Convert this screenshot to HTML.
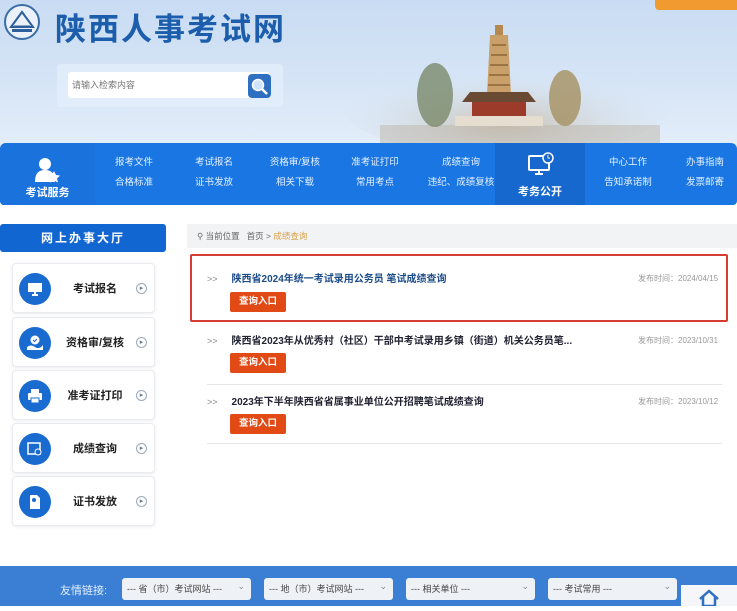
<!DOCTYPE html>
<html><head><meta charset="utf-8"><style>
*{margin:0;padding:0;box-sizing:border-box}
body{width:737px;height:606px;overflow:hidden;background:#fff;font-family:"Liberation Sans","Noto Sans CJK SC",sans-serif;position:relative}
.abs{position:absolute}
.hdr{left:0;top:0;width:737px;height:150px;background:linear-gradient(180deg,#c9dcf3 0%,#d6e5f6 55%,#e4eefa 100%)}
.title{left:55px;top:4px;font-size:31px;font-weight:bold;color:#1c5eab;letter-spacing:2px;font-family:"Noto Sans CJK SC",sans-serif}
.nav{left:0;top:143px;width:737px;height:62px;background:#1976e3;border-radius:6px 6px 4px 4px}
.nl{color:#e8f1ff;font-size:9.5px;text-align:center;line-height:20px}
.side{left:0;top:224px;width:166px;height:28px;background:#1266d2;color:#fff;font-size:12px;font-weight:bold;text-align:center;line-height:28px;border-radius:3px;letter-spacing:2px}
.card{left:12px;width:143px;height:50px;background:#fff;border:1px solid #e8ebef;border-radius:4px;box-shadow:0 1px 3px rgba(0,0,0,.08)}
.card .ic{position:absolute;left:6px;top:9px;width:32px;height:32px;border-radius:50%;background:#1a6bd0}
.card .ic svg{position:absolute;left:8px;top:8px}
.card .t{position:absolute;left:44px;width:76px;text-align:center;top:16px;font-size:11px;color:#222;font-weight:bold}
.card .ar{position:absolute;left:123px;top:19px;width:11px;height:11px;border:1px solid #9ab;border-radius:50%;font-size:7px;color:#678;text-align:center;line-height:10px}
.it{left:207px;font-size:10px;color:#223;font-weight:bold}
.it b{color:#888;font-weight:normal;margin-right:14px;font-size:9px}
.dt{font-size:8px;color:#999;left:638px}
.btn{left:230px;width:56px;height:20px;background:#e24a15;color:#fff;font-size:9.5px;text-align:center;line-height:20px;border-radius:2px;font-weight:bold}
.sel{top:578px;width:129px;height:22px;background:#eef1f5;border-radius:3px;font-size:9px;color:#444;line-height:22px;padding-left:5px}
.sel:after{content:"⌄";position:absolute;right:6px;top:-3px;color:#888}
</style></head><body>
<div class="abs hdr"></div>
<div class="abs" style="left:655px;top:0;width:82px;height:10px;background:#f19a2f;border-radius:0 0 0 4px"></div>
<svg class="abs" style="left:3px;top:3px" width="38" height="38" viewBox="0 0 38 38"><circle cx="19" cy="19" r="17" fill="#eaf1fa" stroke="#3b6ea8" stroke-width="2"/><path d="M8 24 L19 9 L30 24 Z" fill="none" stroke="#2c5f9c" stroke-width="2"/><path d="M9 26h20v3H9z" fill="#2c5f9c"/><path d="M11 23h16" stroke="#2c5f9c"/></svg>
<div class="abs title">陕西人事考试网</div>
<div class="abs" style="left:57px;top:64px;width:226px;height:43px;background:rgba(230,240,252,.7);border-radius:4px"></div>
<div class="abs" style="left:68px;top:72px;width:202px;height:26px;background:#fff;border-radius:3px;font-size:9px;color:#777;line-height:26px;padding-left:4px">请输入检索内容</div>
<div class="abs" style="left:248px;top:74px;width:23px;height:24px;background:#2f6fc2;border-radius:4px"><svg width="23" height="24"><circle cx="10" cy="11" r="5.5" fill="#cfe3fb" stroke="#fff" stroke-width="1.5"/><path d="M14 15l5 5" stroke="#fff" stroke-width="2.5"/></svg></div>
<svg class="abs" style="left:340px;top:20px" width="330" height="125" viewBox="0 0 330 125">
<defs><radialGradient id="g" cx=".5" cy=".7" r=".55"><stop offset="0" stop-color="#c9c0b0"/><stop offset="1" stop-color="#d6e5f6" stop-opacity="0"/></radialGradient></defs>
<ellipse cx="165" cy="85" rx="165" ry="50" fill="url(#g)"/>
<rect x="40" y="105" width="280" height="20" fill="#bdb6aa" opacity=".5"/>
<ellipse cx="95" cy="75" rx="18" ry="32" fill="#7a8a6a" opacity=".8"/>
<ellipse cx="225" cy="78" rx="16" ry="28" fill="#a59060" opacity=".8"/>
<rect x="155" y="5" width="8" height="10" fill="#b58850"/>
<path d="M150 15h18l3 60h-24z" fill="#c9a06a"/>
<path d="M152 25h14M151 35h16M150 45h18M149 55h20M148 65h22" stroke="#8a6535" stroke-width="1.5"/>
<path d="M130 72h58l8 10h-74z" fill="#6b4a33"/>
<rect x="132" y="82" width="54" height="14" fill="#9c3b2a"/>
<rect x="115" y="96" width="88" height="10" fill="#e4ddd0"/>
</svg>
<div class="abs nav"></div>
<div class="abs" style="left:0;top:143px;width:95px;height:62px;background:#1a72dc;border-radius:6px 0 0 4px"></div>
<div class="abs" style="left:495px;top:143px;width:90px;height:62px;background:#1668cf"></div>
<svg class="abs" style="left:33px;top:157px" width="28" height="26"><circle cx="12" cy="7" r="6" fill="#fff"/><path d="M2 25c0-9 4-12 10-12s10 3 10 12z" fill="#fff"/><path d="M21 14l2 4 4 .5-3 3 1 4-4-2-4 2 1-4-3-3 4-.5z" fill="#fff"/></svg>
<div class="abs nl" style="left:0;top:183px;width:95px;font-size:11px;font-weight:bold;color:#fff">考试服务</div>
<div class="abs nl" style="left:104px;top:153px;width:60px">报考文件<br>合格标准</div>
<div class="abs nl" style="left:184px;top:153px;width:60px">考试报名<br>证书发放</div>
<div class="abs nl" style="left:264px;top:153px;width:62px">资格审/复核<br>相关下载</div>
<div class="abs nl" style="left:344px;top:153px;width:62px">准考证打印<br>常用考点</div>
<div class="abs nl" style="left:418px;top:153px;width:86px">成绩查询<br>违纪、成绩复核</div>
<svg class="abs" style="left:527px;top:152px" width="28" height="26"><rect x="2" y="4" width="20" height="14" rx="1" fill="none" stroke="#fff" stroke-width="2"/><path d="M8 22h8M12 18v4" stroke="#fff" stroke-width="2"/><circle cx="21" cy="6" r="5" fill="#1668cf" stroke="#fff" stroke-width="1.5"/><path d="M21 3v3h2" stroke="#fff"/></svg>
<div class="abs nl" style="left:495px;top:182px;width:90px;font-size:11px;font-weight:bold;color:#fff">考务公开</div>
<div class="abs nl" style="left:598px;top:153px;width:60px">中心工作<br>告知承诺制</div>
<div class="abs nl" style="left:676px;top:153px;width:58px">办事指南<br>发票邮寄</div>

<div class="abs side">网上办事大厅</div>
<div class="abs card" style="top:263px"><div class="ic"><svg width="16" height="16"><rect x="1" y="2" width="14" height="9" fill="#fff"/><path d="M5 14h6M8 11v3" stroke="#fff" stroke-width="2"/></svg></div><div class="t">考试报名</div><div class="ar">▸</div></div>
<div class="abs card" style="top:317px"><div class="ic"><svg width="16" height="16"><circle cx="8" cy="5" r="4.5" fill="#fff"/><path d="M6 5l1.5 1.5L10 4" stroke="#1a6bd0" fill="none"/><path d="M0 12q4-3 8 0t8-2v5H0z" fill="#fff"/></svg></div><div class="t">资格审/复核</div><div class="ar">▸</div></div>
<div class="abs card" style="top:370px"><div class="ic"><svg width="16" height="16"><rect x="4" y="1" width="8" height="4" fill="#fff"/><rect x="1" y="5" width="14" height="7" rx="1" fill="#fff"/><rect x="4" y="10" width="8" height="5" fill="#fff" stroke="#1a6bd0"/></svg></div><div class="t">准考证打印</div><div class="ar">▸</div></div>
<div class="abs card" style="top:423px"><div class="ic"><svg width="16" height="16"><rect x="1" y="2" width="12" height="11" fill="none" stroke="#fff" stroke-width="1.5"/><circle cx="11" cy="11" r="3" fill="#1a6bd0" stroke="#fff"/></svg></div><div class="t">成绩查询</div><div class="ar">▸</div></div>
<div class="abs card" style="top:476px"><div class="ic"><svg width="16" height="16"><path d="M3 1h7l3 3v11H3z" fill="#fff"/><circle cx="7" cy="6" r="2" fill="#1a6bd0"/></svg></div><div class="t">证书发放</div><div class="ar">▸</div></div>

<div class="abs" style="left:187px;top:224px;width:550px;height:24px;background:#f2f3f5;font-size:8.5px;color:#666;line-height:24px;padding-left:10px">⚲ 当前位置&nbsp;&nbsp;&nbsp;首页 &gt; <span style="color:#d9a24a">成绩查询</span></div>
<div class="abs" style="left:190px;top:254px;width:538px;height:68px;border:2px solid #d63c32;border-radius:2px"></div>
<div class="abs it" style="top:270px"><b>&gt;&gt;</b><span style="color:#1b4c8a">陕西省2024年统一考试录用公务员 笔试成绩查询</span></div>
<div class="abs dt" style="top:273px">发布时间：2024/04/15</div>
<div class="abs btn" style="top:292px">查询入口</div>
<div class="abs it" style="top:332px"><b>&gt;&gt;</b>陕西省2023年从优秀村（社区）干部中考试录用乡镇（街道）机关公务员笔...</div>
<div class="abs dt" style="top:335px">发布时间：2023/10/31</div>
<div class="abs btn" style="top:353px">查询入口</div>
<div class="abs" style="left:207px;top:384px;width:515px;height:1px;background:#e6e6e6"></div>
<div class="abs it" style="top:393px"><b>&gt;&gt;</b>2023年下半年陕西省省属事业单位公开招聘笔试成绩查询</div>
<div class="abs dt" style="top:396px">发布时间：2023/10/12</div>
<div class="abs btn" style="top:414px">查询入口</div>
<div class="abs" style="left:207px;top:443px;width:515px;height:1px;background:#e6e6e6"></div>

<div class="abs" style="left:0;top:566px;width:737px;height:40px;background:#3a7fd3"></div>
<div class="abs" style="left:60px;top:582px;font-size:11px;color:#e3eefc">友情链接:</div>
<div class="abs sel" style="left:122px">--- 省（市）考试网站 ---</div>
<div class="abs sel" style="left:264px">--- 地（市）考试网站 ---</div>
<div class="abs sel" style="left:406px">--- 相关单位 ---</div>
<div class="abs sel" style="left:548px">--- 考试常用 ---</div>
<div class="abs" style="left:681px;top:585px;width:56px;height:21px;background:#f4f6f9"><svg width="56" height="21"><path d="M19 14l9-8 9 8M22 12v9h12v-9" fill="none" stroke="#2f6fc2" stroke-width="2.5"/></svg></div>
</body></html>
